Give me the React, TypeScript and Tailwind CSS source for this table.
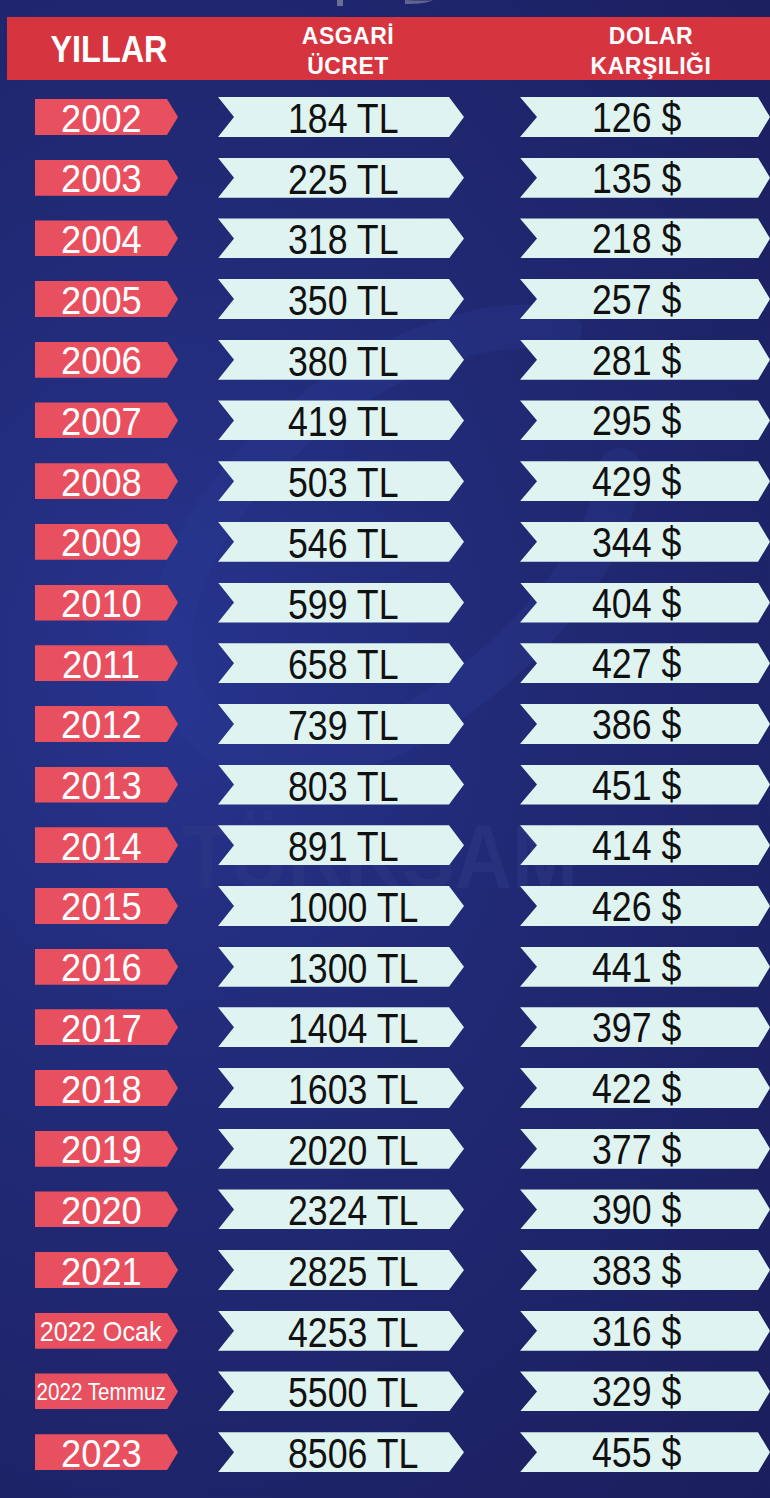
import React from 'react';

const rows = [
  { year: '2002', wage: '184 TL', usd: '126 $' },
  { year: '2003', wage: '225 TL', usd: '135 $' },
  { year: '2004', wage: '318 TL', usd: '218 $' },
  { year: '2005', wage: '350 TL', usd: '257 $' },
  { year: '2006', wage: '380 TL', usd: '281 $' },
  { year: '2007', wage: '419 TL', usd: '295 $' },
  { year: '2008', wage: '503 TL', usd: '429 $' },
  { year: '2009', wage: '546 TL', usd: '344 $' },
  { year: '2010', wage: '599 TL', usd: '404 $' },
  { year: '2011', wage: '658 TL', usd: '427 $' },
  { year: '2012', wage: '739 TL', usd: '386 $' },
  { year: '2013', wage: '803 TL', usd: '451 $' },
  { year: '2014', wage: '891 TL', usd: '414 $' },
  { year: '2015', wage: '1000 TL', usd: '426 $' },
  { year: '2016', wage: '1300 TL', usd: '441 $' },
  { year: '2017', wage: '1404 TL', usd: '397 $' },
  { year: '2018', wage: '1603 TL', usd: '422 $' },
  { year: '2019', wage: '2020 TL', usd: '377 $' },
  { year: '2020', wage: '2324 TL', usd: '390 $' },
  { year: '2021', wage: '2825 TL', usd: '383 $' },
  { year: '2022 Ocak', wage: '4253 TL', usd: '316 $', size: 'small' },
  { year: '2022 Temmuz', wage: '5500 TL', usd: '329 $', size: 'tiny' },
  { year: '2023', wage: '8506 TL', usd: '455 $' },
];

function YearTag({ label, size }: { label: string; size?: string }) {
  const text =
    size === 'small'
      ? 'text-[28px] scale-x-[0.9]'
      : size === 'tiny'
        ? 'text-[24px] scale-x-[0.86]'
        : 'text-[39px] scale-x-[0.93]';
  return (
    <div className="w-[143px] h-[36px] bg-[#e8505f] flex items-center [clip-path:polygon(0_0,calc(100%_-_11px)_0,100%_50%,calc(100%_-_11px)_100%,0_100%)]">
      <div className="w-[132px] flex justify-center">
        <span className={`inline-block whitespace-nowrap text-white leading-none pt-[2px] ${text}`}>{label}</span>
      </div>
    </div>
  );
}

export default function App() {
  return (
    <div className="relative w-[770px] h-[1498px] overflow-hidden bg-[radial-gradient(ellipse_at_22%_45%,#27348e_0%,#212a76_40%,#1b1e5c_100%)] [font-family:'Liberation_Sans',Arial,sans-serif]">
      {/* faint watermark */}
      <div className="absolute inset-0 pointer-events-none">
        <svg width="770" height="1498" viewBox="0 0 770 1498" fill="none">
          <path
            d="M560 330 C 420 300, 180 470, 170 640 C 165 760, 300 790, 420 720 C 520 660, 610 560, 620 470"
            stroke="#2a3a96"
            strokeOpacity="0.3"
            strokeWidth="44"
            strokeLinecap="round"
          />
          <path d="M330 610 l14 -22 l14 22 z" fill="#34418f" fillOpacity="0.5" />
          <rect x="337" y="0" width="6" height="6" fill="#8a8fa8" fillOpacity="0.7" />
          <path d="M405 0 q 22 1 28 0 q -6 4 -28 4 z" fill="#8a8fa8" fillOpacity="0.6" />
        </svg>
        <div className="absolute left-[180px] top-[812px] w-[400px] flex justify-center">
          <span className="inline-block text-[90px] font-bold leading-none text-[#2d3884] opacity-50 scale-x-[0.88]">TÜRKSAM</span>
        </div>
      </div>

      <div className="relative pt-[17px]">
        {/* header */}
        <div className="ml-[7px] h-[63px] bg-[#d6343f] flex items-center text-white font-bold">
          <div className="w-[203px] flex justify-center pt-[2px]">
            <span className="inline-block text-[36px] leading-none scale-x-[0.9]">YILLAR</span>
          </div>
          <div className="w-[276px] text-center text-[23px] tracking-[0.5px] leading-[30px] pt-[4px]">
            <div>ASGARİ</div>
            <div>ÜCRET</div>
          </div>
          <div className="flex-1 pl-[46px] text-center text-[23px] tracking-[0.5px] leading-[30px] pt-[4px]">
            <div>DOLAR</div>
            <div>KARŞILIĞI</div>
          </div>
        </div>

        {/* rows */}
        <div className="mt-[17px] flex flex-col gap-[20.7px]">
          {rows.map((r) => (
            <div key={r.year} className="h-[40px] flex items-center pl-[35px]">
              <YearTag label={r.year} size={r.size} />
              <div className="ml-[40px] w-[246px] h-[40px] bg-[#dff3f0] flex items-center pl-[70px] [clip-path:polygon(0_0,calc(100%_-_15px)_0,100%_50%,calc(100%_-_15px)_100%,0_100%,16px_50%)]">
                <span className="inline-block origin-left whitespace-nowrap text-[42px] leading-none text-[#111] pt-[4px] scale-x-[0.85]">{r.wage}</span>
              </div>
              <div className="ml-[56px] w-[250px] h-[40px] bg-[#dff3f0] flex items-center pl-[72px] [clip-path:polygon(0_0,calc(100%_-_12px)_0,100%_50%,calc(100%_-_12px)_100%,0_100%,17px_50%)]">
                <span className="inline-block origin-left whitespace-nowrap text-[42px] leading-none text-[#111] pt-[2px] scale-x-[0.85]">{r.usd}</span>
              </div>
            </div>
          ))}
        </div>
      </div>
    </div>
  );
}
